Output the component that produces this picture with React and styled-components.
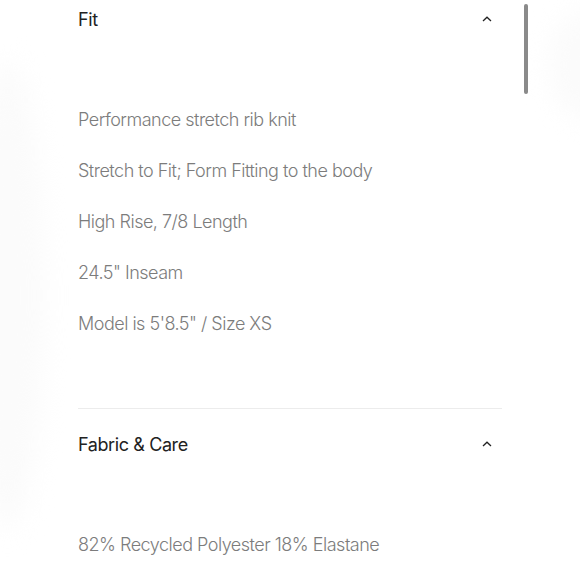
import styled, { createGlobalStyle } from 'styled-components';

const Global = createGlobalStyle`
  html, body {
    margin: 0;
    padding: 0;
    background: #ffffff;
  }
  body {
    font-family: Inter, "Noto Sans", sans-serif;
    -webkit-font-smoothing: antialiased;
  }
`

const Page = styled.div`
  position: relative;
  width: 580px;
  height: 580px;
  overflow: hidden;
  background: #ffffff;
`

const Glow = styled.div`
  position: absolute;
  border-radius: 50%;
  background: #fbfbfb;
  filter: blur(12px);
  left: ${p => p.left}px;
  top: ${p => p.top}px;
  width: ${p => p.w}px;
  height: ${p => p.h}px;
`

const Content = styled.div`
  position: relative;
  width: 424px;
  margin-left: 78px;
`

const Section = styled.div`
  padding-top: ${p => p.top}px;
`

const Header = styled.div`
  display: flex;
  align-items: center;
  justify-content: space-between;
  height: 38px;
`

const Title = styled.div`
  font-size: 18px;
  color: #222222;
  letter-spacing: -0.4px;
`

const Chevron = styled.svg`
  width: 10px;
  height: 6px;
  margin-right: 10px;
`

const Body = styled.div`
  padding-top: 56px;
  padding-bottom: 59px;
`

const Line = styled.div`
  height: 51px;
  line-height: 51px;
  font-size: 18px;
  font-weight: 350;
  color: #7c7c7c;
  letter-spacing: -0.5px;
  white-space: nowrap;
`

const Divider = styled.div`
  height: 1px;
  background: #ececec;
`

const Scrollbar = styled.div`
  position: absolute;
  left: 524px;
  top: 4px;
  width: 4px;
  height: 90px;
  border-radius: 2px;
  background: #8a8a8a;
`

const Up = () => (
  <Chevron viewBox="0 0 10 6">
    <polyline points="1,5 5,1.2 9,5" fill="none" stroke="#222" strokeWidth="1.3" />
  </Chevron>
)

const fit = [
  'Performance stretch rib knit',
  'Stretch to Fit; Form Fitting to the body',
  'High Rise, 7/8 Length',
  '24.5" Inseam',
  'Model is 5\'8.5" / Size XS',
]

export default function App() {
  return (
    <Page>
      <Global />
      <Glow left={-30} top={60} w={75} h={470} />
      <Glow left={548} top={10} w={90} h={110} />
      <Content>
        <Section top={0}>
          <Header>
            <Title>Fit</Title>
            <Up />
          </Header>
          <Body>
            {fit.map(t => <Line key={t}>{t}</Line>)}
          </Body>
        </Section>
        <Divider />
        <Section top={16}>
          <Header>
            <Title>Fabric &amp; Care</Title>
            <Up />
          </Header>
          <Body>
            <Line>82% Recycled Polyester 18% Elastane</Line>
          </Body>
        </Section>
      </Content>
      <Scrollbar />
    </Page>
  )
}
